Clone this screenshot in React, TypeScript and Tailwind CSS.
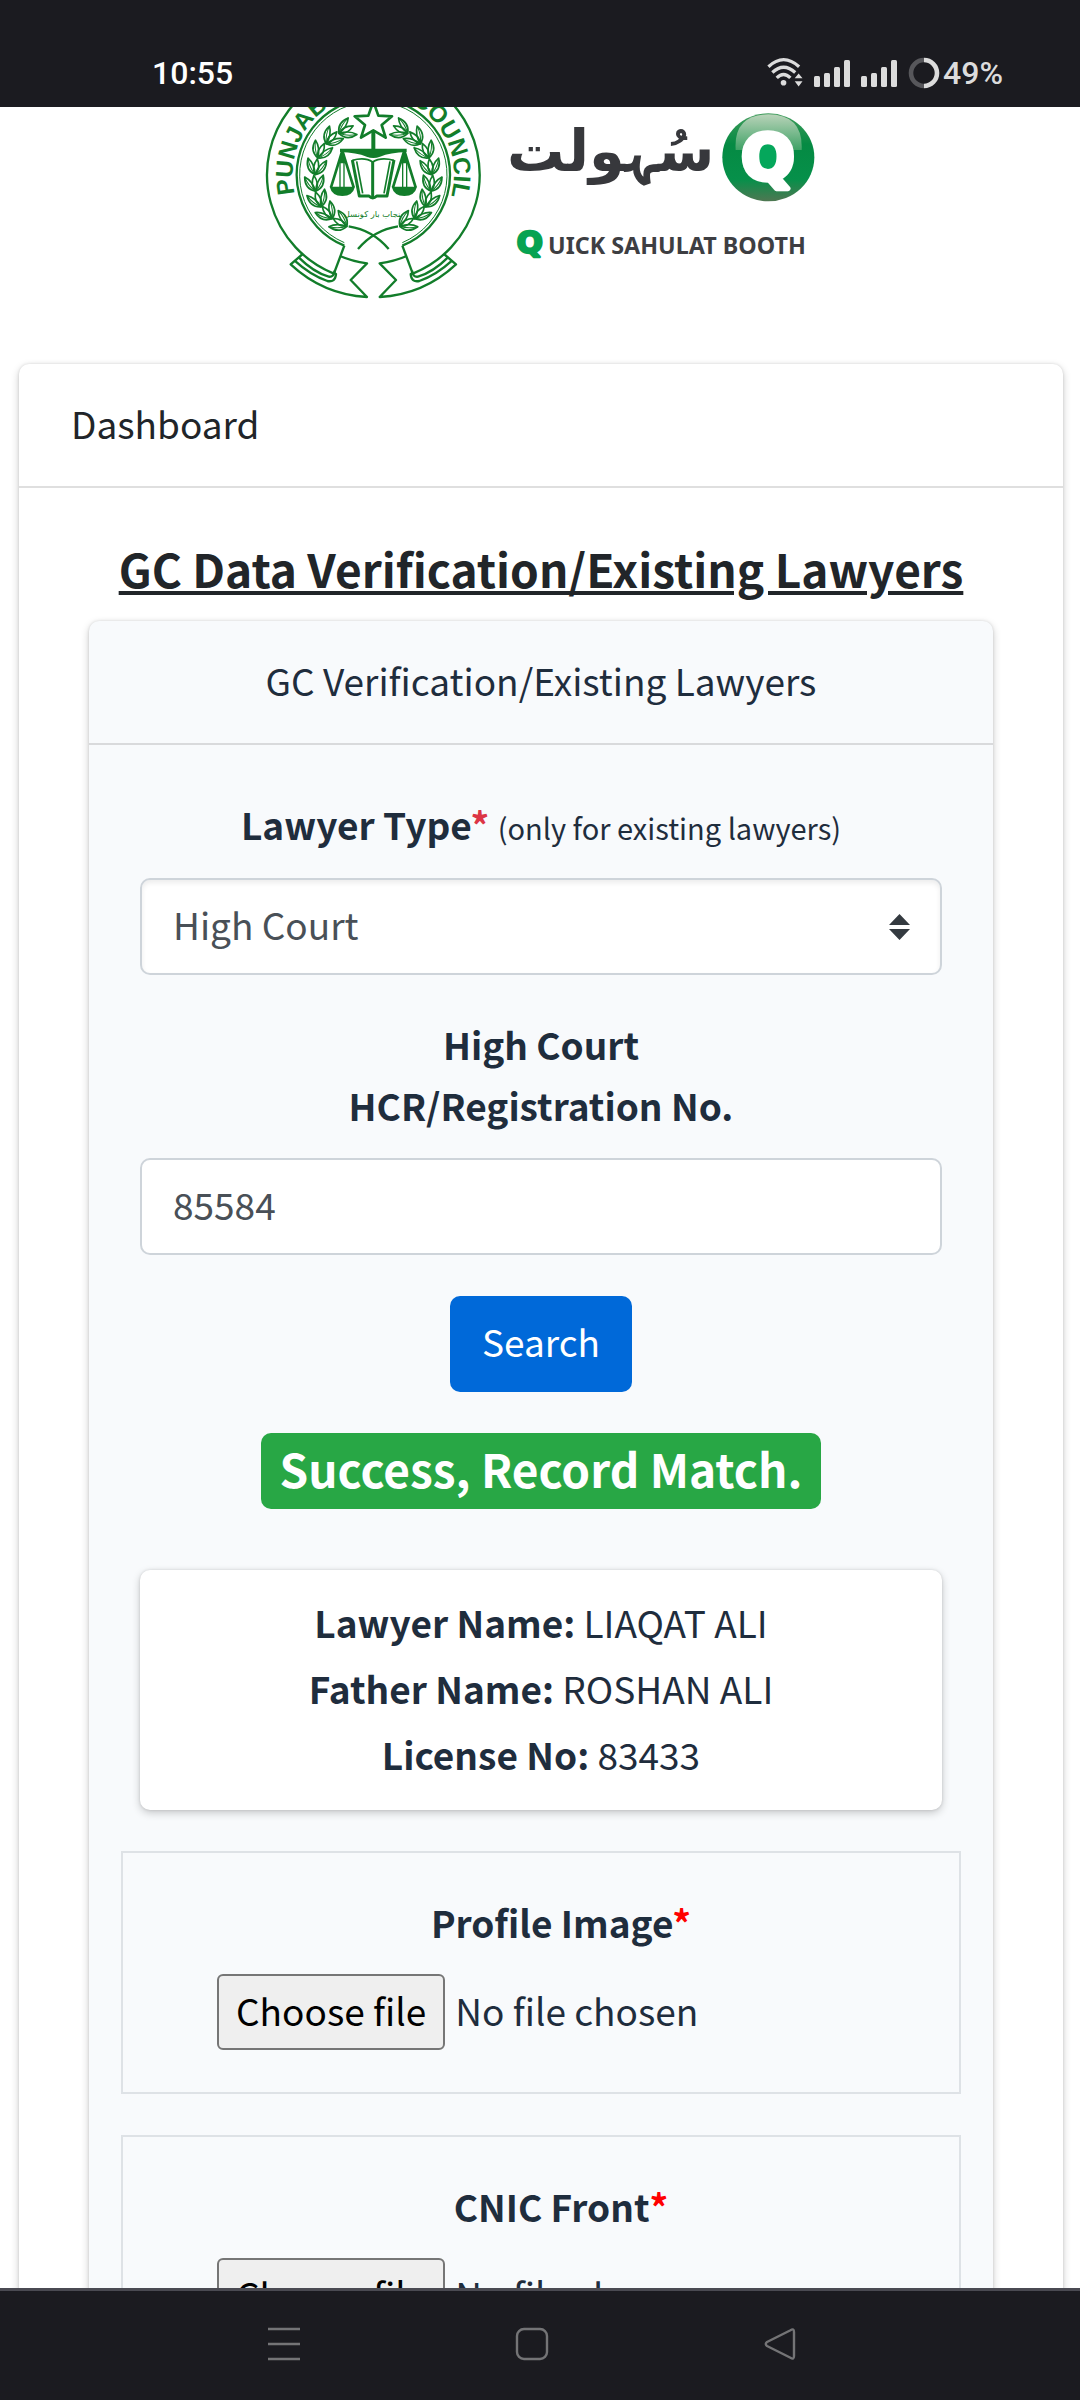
import type { ReactNode } from "react";

const GREEN = "#127d2a";

const cardShadow = "shadow-[0_0_3px_rgba(0,0,0,0.125),0_3px_8px_rgba(0,0,0,0.2)]";

function StatusBar() {
  return (
    <header className="flex h-[107px] shrink-0 items-end justify-between bg-[#1b1b20] pr-[77px] pb-[16px] pl-[152px] font-['Roboto',sans-serif] text-[32px] leading-[36px] font-medium">
      <time className="text-white">10:55</time>
      <div className="flex items-center gap-[11px] text-[#dcdcdc]">
        <svg width="36" height="32" viewBox="0 0 37 32" fill="none" stroke="currentColor" strokeWidth="3.4" aria-label="Wi-Fi">
          <path d="M1.5 9.5Q17 -5 33 9.5" />
          <path d="M5.5 15.5Q17 4.5 29 15.5" />
          <path d="M10 21Q17 14 24 21" />
          <circle cx="17" cy="26" r="2.9" fill="currentColor" stroke="none" />
          <path d="M28.5 21.5L32.5 16.5L36.5 21.5ZM28.5 24.5L32.5 30L36.5 24.5Z" fill="currentColor" stroke="none" />
        </svg>
        <SignalBars />
        <SignalBars />
        <div className="flex items-center gap-[3px]">
          <svg width="32" height="32" viewBox="0 0 32 32" fill="none" strokeWidth="4.6" aria-label="Battery">
            <path d="M16 3A13 13 0 0 0 16 29" stroke="#57575b" />
            <path d="M16 3A13 13 0 0 1 16 29" stroke="#dcdcdc" />
          </svg>
          <span>49%</span>
        </div>
      </div>
    </header>
  );
}

function SignalBars() {
  return (
    <svg width="36" height="28" viewBox="0 0 36 28" fill="currentColor" aria-label="Signal">
      <rect x="0" y="17" width="6" height="11" rx="1.5" />
      <rect x="10" y="14" width="6" height="14" rx="1.5" />
      <rect x="20" y="8" width="6" height="20" rx="1.5" />
      <rect x="30" y="1" width="6" height="27" rx="1.5" />
    </svg>
  );
}

const leaves = [
  [290, 88, 62],
  [246, 112, 42],
  [214, 150, 24],
  [199, 198, 8],
  [194, 248, -6],
  [204, 296, -20],
  [230, 336, -38],
  [268, 366, -60],
];

function EmblemSide() {
  return (
    <g>
      {leaves.map(([x, y, r]) => (
        <g key={y} transform={`translate(${x} ${y}) rotate(${r})`} strokeWidth="5">
          <path d="M0 24Q-15 6 0 -22Q15 6 0 24Z" />
          <path d="M0 26Q-32 16 -28 -20Q-6 -6 0 26Z" />
          <path d="M0 26Q32 16 28 -20Q6 -6 0 26Z" />
          <path d="M0 26Q-20 8 -28 -20M0 26Q20 8 28 -20" strokeWidth="3" />
        </g>
      ))}
      <path d="M296 379Q368 390 416 447" />
      <path d="M277 152L243 262M277 152L311 262" strokeWidth="8" />
      <path d="M270 185V262M282 185V262" strokeWidth="4" />
      <path d="M277 150L264 190H290Z" fill={GREEN} stroke="none" />
      <path d="M239 260H315Q308 288 277 288Q246 288 239 260Z" fill={GREEN} stroke="none" />
      <path d="M283 437L252 520" />
      <path d="M158 462L122 493A366 366 0 0 0 351 591L302 540L351 490Q306 484 270 468" />
      <path d="M134 482Q182 526 232 543Q256 548 258 522L250 518" />
      <path d="M146 472Q190 516 236 530Q252 532 254 512" />
    </g>
  );
}

function Logo() {
  return (
    <svg className="w-[580px] max-w-full" viewBox="0 21 1740 609" role="img" aria-label="Punjab Bar Council, Quick Sahulat Booth">
      <defs>
        <path id="ring" d="M137 289A242 242 0 1 1 603 289" />
        <linearGradient id="ball" x1="0" y1="0" x2="0" y2="1">
          <stop offset="0" stopColor="#3f9c5b" />
          <stop offset="0.35" stopColor="#058a43" />
          <stop offset="0.75" stopColor="#06904a" />
          <stop offset="1" stopColor="#4f7752" />
        </linearGradient>
        <linearGradient id="gloss" x1="0" y1="0" x2="0" y2="1">
          <stop offset="0" stopColor="#b9d3b9" />
          <stop offset="1" stopColor="#3fa266" />
        </linearGradient>
      </defs>

      <g fill="none" stroke={GREEN} strokeWidth="7" strokeLinejoin="round">
        <path d="M250 520A319 319 0 1 1 490 520" />
        <path d="M283 437A230 230 0 1 1 457 437" />
        <path d="M283 428A221 221 0 1 1 457 428" strokeWidth="3" />
        <EmblemSide />
        <g transform="translate(740 0) scale(-1 1)">
          <EmblemSide />
        </g>
        <path d="M370 4L385 47L426 49L395 75L407 113L370 91L333 113L345 75L314 49L355 47Z" strokeWidth="8" />
        <path d="M370 90V155" strokeWidth="12" />
        <path d="M270 146H470V156Q420 158 390 170Q370 178 350 170Q320 158 270 156Z" fill={GREEN} stroke="none" />
        <path d="M307 180L328 288H357Q368 300 380 288H411L432 180" strokeWidth="9" />
        <path d="M307 181Q345 170 368 186Q392 170 432 181M320 184L338 280M420 184L402 280" strokeWidth="5" />
        <path d="M368 186V292" strokeWidth="9" />
      </g>
      <g fill={GREEN} fontFamily="'Liberation Sans', sans-serif" fontWeight="700" fontSize="72">
        <text>
          <textPath href="#ring" startOffset="8">PUNJAB BAR</textPath>
        </text>
        <text textAnchor="end">
          <textPath href="#ring" startOffset="100%">COUNCIL</textPath>
        </text>
      </g>
      <text x="370" y="350" textAnchor="middle" fill={GREEN} fontFamily="'DejaVu Sans', sans-serif" fontSize="25">
        پنجاب بار کونسل
      </text>

      <text x="1082" y="214" textAnchor="middle" fill="#37383c" fontFamily="'DejaVu Sans', sans-serif" fontWeight="700" fontSize="172">
        سُہولت
      </text>
      <ellipse cx="1555" cy="172" rx="138" ry="132" fill="url(#ball)" />
      <path d="M1457 150Q1450 44 1555 43Q1660 44 1655 150Z" fill="url(#gloss)" />
      <circle cx="1553" cy="172" r="50" fill="#05a75b" />
      <text x="1554" y="238" textAnchor="middle" fill="#ffffff" stroke="#ffffff" strokeWidth="16" strokeLinejoin="round" fontFamily="'DejaVu Sans', sans-serif" fontWeight="700" fontSize="188">
        Q
      </text>
      <text x="800" y="458" fill="#07a352" stroke="#07a352" strokeWidth="8" strokeLinejoin="round" fontFamily="'DejaVu Sans', sans-serif" fontWeight="700" fontSize="92">
        Q
      </text>
      <text x="894" y="461" fill="#3d3e42" fontFamily="'Noto Sans', sans-serif" fontWeight="700" fontSize="70">
        UICK SAHULAT BOOTH
      </text>
    </svg>
  );
}

function CardHeader({ children, centered }: { children: ReactNode; centered?: boolean }) {
  return (
    <div className={`border-b-2 border-black/[0.125] px-[52px] pt-[29px] pb-[32px] ${centered ? "text-center" : ""}`}>{children}</div>
  );
}

function DetailRow({ name, value }: { name: string; value: string }) {
  return (
    <div>
      <dt className="inline font-bold">{name}:</dt> <dd className="inline">{value}</dd>
    </div>
  );
}

function FileField({ id, label }: { id: string; label: string }) {
  return (
    <div className="border-2 border-[#dee2e6] pt-[39px] pr-[54px] pb-[42px] pl-[94px]">
      <label htmlFor={id} className="mb-[21px] block text-center font-bold">
        {label}
        <span className="text-[#ff0000]">*</span>
      </label>
      <label className="relative flex items-center gap-[10px]">
        <input id={id} type="file" className="absolute inset-0 w-full opacity-0" />
        <span className="flex h-[76px] items-center rounded-[6px] border-2 border-[#767676] bg-[#efefef] px-[17px] pb-[4px] text-black">Choose file</span>
        <span className="pb-[4px]">No file chosen</span>
      </label>
    </div>
  );
}

function NavigationBar() {
  return (
    <nav className="flex h-[112px] shrink-0 items-center justify-center gap-[215px] border-t-[3px] border-[#4a4a52] bg-[#1b1b20] pr-[16px] pb-[3px] text-[#747476]">
      <button type="button" aria-label="Recent apps">
        <svg width="32" height="34" viewBox="0 0 32 34" stroke="currentColor" strokeWidth="2.4">
          <path d="M0 2H32M0 17H32M0 32H32" />
        </svg>
      </button>
      <button type="button" aria-label="Home">
        <svg width="34" height="34" viewBox="0 0 34 34" fill="none" stroke="currentColor" strokeWidth="2.4">
          <rect x="2" y="2" width="30" height="30" rx="7" />
        </svg>
      </button>
      <button type="button" aria-label="Back">
        <svg width="32" height="34" viewBox="0 0 32 34" fill="none" stroke="currentColor" strokeWidth="2.4" strokeLinejoin="round">
          <path d="M26.5 3.2Q30 1 30 5V29Q30 33 26.5 30.8L3 19Q0.5 17 3 15Z" />
        </svg>
      </button>
    </nav>
  );
}

const control = "h-[97px] w-full rounded-[10px] border-2 border-[#ced4da] bg-white px-[31px] pb-[5px] text-[#495057]";

export default function App() {
  return (
    <div className="flex h-screen flex-col bg-white font-['Noto_Sans_CJK_SC',sans-serif] text-[37px] leading-[61px] text-[#212529]">
      <StatusBar />
      <main className="min-h-0 flex-1 overflow-hidden">
        <div className="flex justify-center">
          <Logo />
        </div>
        <section className={`mt-[54px] mr-[17px] ml-[19px] rounded-[10px] bg-white pb-[52px] ${cardShadow}`}>
          <CardHeader>Dashboard</CardHeader>
          <div className="px-[70px] pt-[50px]">
            <h1 className="mb-[22px] text-center text-[46px] leading-[61px] font-bold whitespace-nowrap underline">
              GC Data Verification/Existing Lawyers
            </h1>
            <section className={`rounded-[10px] bg-[#f8fafc] text-[#1f2d3d] ${cardShadow}`}>
              <CardHeader centered>GC Verification/Existing Lawyers</CardHeader>
              <form className="px-[32px] py-[49px]" onSubmit={(e) => e.preventDefault()}>
                <div className="flex flex-col items-center px-[19px]">
                  <label htmlFor="lawyer-type" className="mb-[23px]">
                    <b>
                      Lawyer Type<span className="text-[#dc3545]">*</span>
                    </b>{" "}
                    <span className="text-[29px] leading-none">(only for existing lawyers)</span>
                  </label>
                  <div className="relative mb-[39px] w-full">
                    <select id="lawyer-type" defaultValue="High Court" className={`${control} block appearance-none shadow-[inset_0_3px_5px_rgba(0,0,0,0.075)]`}>
                      <option>High Court</option>
                      <option>Lower Court</option>
                    </select>
                    <svg className="pointer-events-none absolute top-1/2 right-[32px] -translate-y-1/2" width="21" height="26" viewBox="0 0 21 26" fill="#343a40" aria-hidden="true">
                      <path d="M0 11L10.5 0L21 11ZM0 15L10.5 26L21 15Z" />
                    </svg>
                  </div>
                  <label htmlFor="registration" className="mb-[22px] text-center font-bold">
                    High Court
                    <br />
                    HCR/Registration No.
                  </label>
                  <input id="registration" type="text" defaultValue="85584" className={`${control} mb-[41px]`} />
                  <button type="submit" className="mb-[41px] h-[96px] rounded-[10px] bg-[#0069d9] px-[32px] pb-[5px] text-white">
                    Search
                  </button>
                  <output className="mb-[61px] flex h-[76px] items-center rounded-[10px] bg-[#28a745] px-[19px] pb-[6px] text-[46px] font-bold text-white">
                    Success, Record Match.
                  </output>
                  <dl className={`mb-[41px] w-full rounded-[10px] bg-white pt-[19px] pb-[23px] text-center leading-[66px] ${cardShadow}`}>
                    <DetailRow name="Lawyer Name" value="LIAQAT ALI" />
                    <DetailRow name="Father Name" value="ROSHAN ALI" />
                    <DetailRow name="License No" value="83433" />
                  </dl>
                </div>
                <div className="flex flex-col gap-[41px]">
                  <FileField id="profile-image" label="Profile Image" />
                  <FileField id="cnic-front" label="CNIC Front" />
                </div>
              </form>
            </section>
          </div>
        </section>
      </main>
      <NavigationBar />
    </div>
  );
}
